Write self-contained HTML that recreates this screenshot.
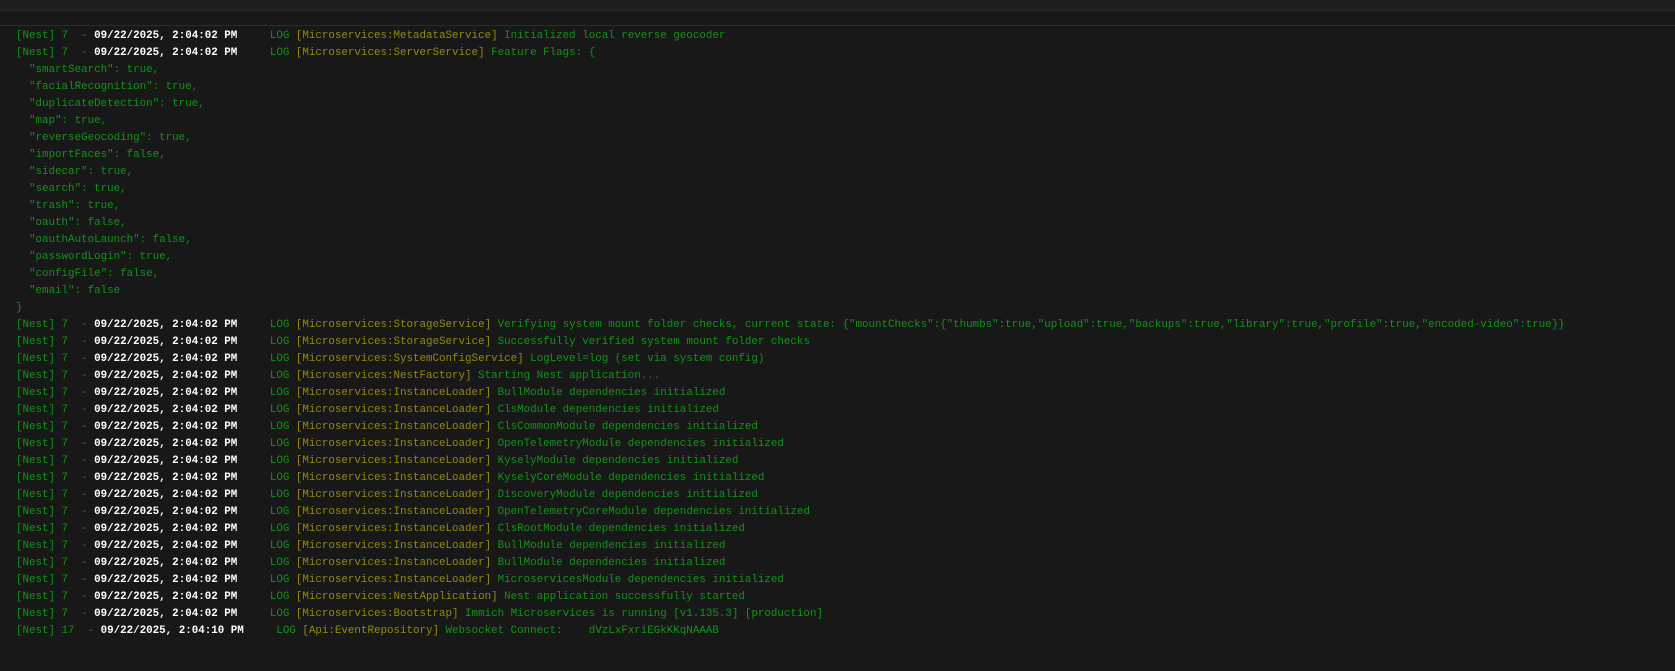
<!DOCTYPE html>
<html><head><meta charset="utf-8"><style>
html,body{margin:0;padding:0;background:#181818;width:1675px;height:671px;overflow:hidden}
.top{position:absolute;left:0;top:0;width:1675px;height:10px;background:#1f1f1f;border-bottom:1px solid #2b2b2b}
.bar{position:absolute;left:0;top:11px;width:1675px;height:14px;background:#181818;border-bottom:1px solid #2b2b2b}
pre{position:absolute;left:16px;top:28px;margin:0;font-family:"Liberation Mono",monospace;font-size:10.85px;line-height:17px;color:#12931a;white-space:pre}
.g{color:#12931a}.y{color:#938a10}.w{color:#fff;font-weight:bold}
</style></head><body><div class="top"></div><div class="bar"></div>
<pre><span class="g">[Nest] 7  - </span><span class="w">09/22/2025, 2:04:02 PM</span>     <span class="g">LOG</span> <span class="y">[Microservices:MetadataService]</span> Initialized local reverse geocoder
<span class="g">[Nest] 7  - </span><span class="w">09/22/2025, 2:04:02 PM</span>     <span class="g">LOG</span> <span class="y">[Microservices:ServerService]</span> Feature Flags: {
  "smartSearch": true,
  "facialRecognition": true,
  "duplicateDetection": true,
  "map": true,
  "reverseGeocoding": true,
  "importFaces": false,
  "sidecar": true,
  "search": true,
  "trash": true,
  "oauth": false,
  "oauthAutoLaunch": false,
  "passwordLogin": true,
  "configFile": false,
  "email": false
}
<span class="g">[Nest] 7  - </span><span class="w">09/22/2025, 2:04:02 PM</span>     <span class="g">LOG</span> <span class="y">[Microservices:StorageService]</span> Verifying system mount folder checks, current state: {"mountChecks":{"thumbs":true,"upload":true,"backups":true,"library":true,"profile":true,"encoded-video":true}}
<span class="g">[Nest] 7  - </span><span class="w">09/22/2025, 2:04:02 PM</span>     <span class="g">LOG</span> <span class="y">[Microservices:StorageService]</span> Successfully verified system mount folder checks
<span class="g">[Nest] 7  - </span><span class="w">09/22/2025, 2:04:02 PM</span>     <span class="g">LOG</span> <span class="y">[Microservices:SystemConfigService]</span> LogLevel=log (set via system config)
<span class="g">[Nest] 7  - </span><span class="w">09/22/2025, 2:04:02 PM</span>     <span class="g">LOG</span> <span class="y">[Microservices:NestFactory]</span> Starting Nest application...
<span class="g">[Nest] 7  - </span><span class="w">09/22/2025, 2:04:02 PM</span>     <span class="g">LOG</span> <span class="y">[Microservices:InstanceLoader]</span> BullModule dependencies initialized
<span class="g">[Nest] 7  - </span><span class="w">09/22/2025, 2:04:02 PM</span>     <span class="g">LOG</span> <span class="y">[Microservices:InstanceLoader]</span> ClsModule dependencies initialized
<span class="g">[Nest] 7  - </span><span class="w">09/22/2025, 2:04:02 PM</span>     <span class="g">LOG</span> <span class="y">[Microservices:InstanceLoader]</span> ClsCommonModule dependencies initialized
<span class="g">[Nest] 7  - </span><span class="w">09/22/2025, 2:04:02 PM</span>     <span class="g">LOG</span> <span class="y">[Microservices:InstanceLoader]</span> OpenTelemetryModule dependencies initialized
<span class="g">[Nest] 7  - </span><span class="w">09/22/2025, 2:04:02 PM</span>     <span class="g">LOG</span> <span class="y">[Microservices:InstanceLoader]</span> KyselyModule dependencies initialized
<span class="g">[Nest] 7  - </span><span class="w">09/22/2025, 2:04:02 PM</span>     <span class="g">LOG</span> <span class="y">[Microservices:InstanceLoader]</span> KyselyCoreModule dependencies initialized
<span class="g">[Nest] 7  - </span><span class="w">09/22/2025, 2:04:02 PM</span>     <span class="g">LOG</span> <span class="y">[Microservices:InstanceLoader]</span> DiscoveryModule dependencies initialized
<span class="g">[Nest] 7  - </span><span class="w">09/22/2025, 2:04:02 PM</span>     <span class="g">LOG</span> <span class="y">[Microservices:InstanceLoader]</span> OpenTelemetryCoreModule dependencies initialized
<span class="g">[Nest] 7  - </span><span class="w">09/22/2025, 2:04:02 PM</span>     <span class="g">LOG</span> <span class="y">[Microservices:InstanceLoader]</span> ClsRootModule dependencies initialized
<span class="g">[Nest] 7  - </span><span class="w">09/22/2025, 2:04:02 PM</span>     <span class="g">LOG</span> <span class="y">[Microservices:InstanceLoader]</span> BullModule dependencies initialized
<span class="g">[Nest] 7  - </span><span class="w">09/22/2025, 2:04:02 PM</span>     <span class="g">LOG</span> <span class="y">[Microservices:InstanceLoader]</span> BullModule dependencies initialized
<span class="g">[Nest] 7  - </span><span class="w">09/22/2025, 2:04:02 PM</span>     <span class="g">LOG</span> <span class="y">[Microservices:InstanceLoader]</span> MicroservicesModule dependencies initialized
<span class="g">[Nest] 7  - </span><span class="w">09/22/2025, 2:04:02 PM</span>     <span class="g">LOG</span> <span class="y">[Microservices:NestApplication]</span> Nest application successfully started
<span class="g">[Nest] 7  - </span><span class="w">09/22/2025, 2:04:02 PM</span>     <span class="g">LOG</span> <span class="y">[Microservices:Bootstrap]</span> Immich Microservices is running [v1.135.3] [production]
<span class="g">[Nest] 17  - </span><span class="w">09/22/2025, 2:04:10 PM</span>     <span class="g">LOG</span> <span class="y">[Api:EventRepository]</span> Websocket Connect:    dVzLxFxriEGkKKqNAAAB</pre>
</body></html>
